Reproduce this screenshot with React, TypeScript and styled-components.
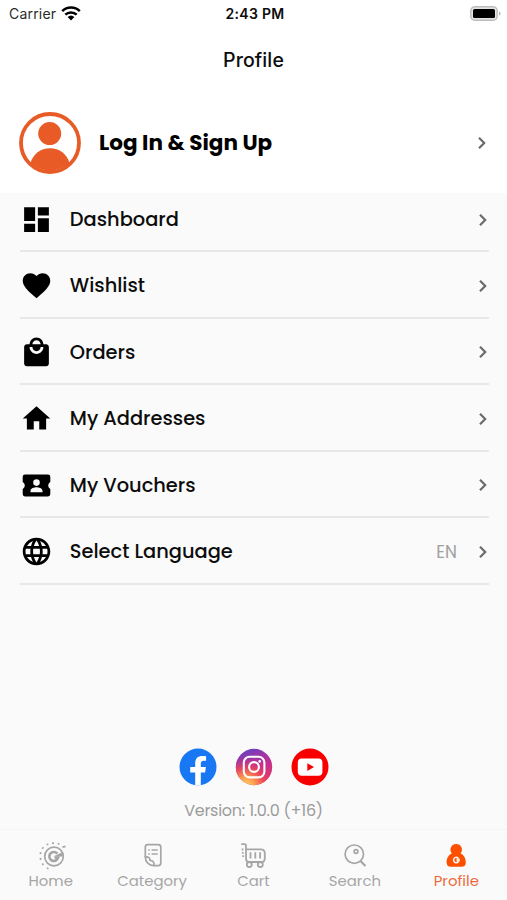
import React from 'react';
import styled, { createGlobalStyle } from 'styled-components';
import { MdDashboard, MdFavorite, MdLocalMall, MdHome, MdLanguage } from 'react-icons/md';

const GlobalStyle = createGlobalStyle`
  * { box-sizing: border-box; }
  body { margin: 0; background: #fafafa; }
`;

const Screen = styled.div`
  width: 100%;
  max-width: 507px;
  height: 900px;
  display: flex;
  flex-direction: column;
  overflow: hidden;
  background: #fafafa;
  color: #0c0c0c;
  font-family: Poppins, Inter, sans-serif;
`;

const Label = styled.span<{ $track?: number }>`
  letter-spacing: ${({ $track = 0 }) => $track}px;
  white-space: nowrap;
`;

const StatusBar = styled.div`
  display: grid;
  grid-template-columns: 1fr auto 1fr;
  align-items: center;
  height: 27px;
  padding: 0 6px 0 9px;
  background: #fff;
  font-family: Inter, sans-serif;
  font-size: 14px;
  line-height: 27px;
`;

const Carrier = styled.div`
  display: flex;
  align-items: center;
  gap: 5px;
  color: #2b2b2b;
`;

const Clock = styled.div`
  font-weight: 600;
`;

const BatterySlot = styled.div`
  display: flex;
  justify-content: flex-end;
`;

const TitleBar = styled.header`
  height: 65px;
  background: #fff;
  text-align: center;
  font-family: Inter, sans-serif;
  font-size: 19.5px;
  font-weight: 500;
  line-height: 66px;
`;

const LoginRow = styled.div`
  display: flex;
  align-items: center;
  height: 101px;
  padding: 0 20px 0 19px;
  background: #fff;
  color: #000;
`;

const LoginLabel = styled(Label)`
  flex: 1;
  margin-left: 18px;
  font-size: 21.5px;
  font-weight: 700;
`;

const Menu = styled.div`
  flex: 1;
  min-height: 0;
  padding: 0 18px 0 19.5px;
  overflow: hidden;
`;

const MenuRow = styled.div`
  display: flex;
  align-items: center;
  height: 66.5px;
  padding-top: 3px;
  padding-right: 1.5px;
  border-bottom: 2px solid #e8e8e8;

  &:first-child {
    height: 59px;
    padding-top: 0;
    padding-bottom: 4px;
  }
`;

const IconSlot = styled.div`
  display: flex;
  width: 33px;
  margin-right: 17.3px;
  color: #000;
`;

const MenuLabel = styled(Label)`
  flex: 1;
  font-size: 19.4px;
  font-weight: 500;
`;

const Value = styled.span`
  margin-right: 20.5px;
  color: #a0a0a0;
  font-size: 17px;
`;

const Footer = styled.div`
  display: flex;
  flex-direction: column;
  align-items: center;
  height: 81px;
`;

const Socials = styled.div`
  display: flex;
  gap: 18px;
`;

const Version = styled.div`
  margin-top: 12px;
  color: #9c9c9c;
  font-size: 16px;
  line-height: 26px;
`;

const NavBar = styled.nav`
  display: grid;
  grid-template-columns: repeat(5, 1fr);
  height: 71px;
  border-top: 1px solid #f4f4f4;
`;

const NavItem = styled.div<{ $active?: boolean }>`
  display: flex;
  flex-direction: column;
  align-items: center;
  padding-top: 11px;
  color: ${({ $active }) => ($active ? '#ed6a3c' : '#a6a6a6')};
  font-size: 14.9px;
  line-height: 22px;
`;

const NavIcon = styled.div`
  display: flex;
  height: 29px;
`;

const WifiIcon = () => (
  <svg width="20" height="15" viewBox="0 0 20 15">
    <g fill="none" stroke="#000" strokeWidth="2.5">
      <path d="M1.2 5.2a12.4 12.4 0 0 1 17.6 0" />
      <path d="M4.3 8.7a8.2 8.2 0 0 1 11.4 0" />
    </g>
    <path d="M6.6 11a5 5 0 0 1 6.8 0L10 14.5z" fill="#000" />
  </svg>
);

const BatteryIcon = () => (
  <svg width="31" height="15" viewBox="0 0 31 15">
    <rect x=".8" y=".8" width="26.4" height="13.4" rx="4" fill="#e4e4e4" stroke="#bdbdbd" strokeWidth="1.5" />
    <rect x="3" y="3" width="22" height="9" rx="1.5" fill="#000" />
    <path d="M29 5.4c2 .6 2 3.6 0 4.2z" fill="#b4b4b4" />
  </svg>
);

const Avatar = () => (
  <svg width="62" height="62" viewBox="0 0 62 62">
    <circle cx="31" cy="31" r="29" fill="#fff" stroke="#e85b27" strokeWidth="3.8" />
    <circle cx="30.7" cy="21.6" r="11.5" fill="#e85b27" />
    <path d="M11.5 51C14 42 21.5 36.2 31 36.2S48 42 50.5 51A29 29 0 0 1 11.5 51z" fill="#e85b27" />
  </svg>
);

const Chevron = () => (
  <svg width="10" height="14" viewBox="0 0 10 14">
    <path d="M2 1.8l5.200 5.200L2 12.200" fill="none" stroke="#6b6b6b" strokeWidth="2.200" />
  </svg>
);

const VoucherIcon = () => (
  <svg width="33" height="33" viewBox="0 0 33 33">
    <path
      fill="#000"
      fillRule="evenodd"
      d="M5 5.500h23a2.300 2.300 0 0 1 2.300 2.300v5.100a4.100 4.100 0 0 0 0 7.100v5.100a2.300 2.300 0 0 1-2.300 2.300H5a2.300 2.300 0 0 1-2.300-2.300V20a4.100 4.100 0 0 0 0-7.100V7.800A2.300 2.300 0 0 1 5 5.500zM16.500 10.300a3.300 3.300 0 1 0 0 6.600 3.300 3.300 0 0 0 0-6.600zM10.500 23.300h12v-1.500c0-2.400-3.800-3.500-6-3.500s-6 1.100-6 3.500z"
    />
  </svg>
);

const FacebookIcon = () => (
  <svg width="38" height="38" viewBox="0 0 38 38">
    <circle cx="19" cy="19" r="18.5" fill="#1877f2" />
    <path
      fill="#fff"
      d="M16.2 37.300V24.400h-5v-5.300h5v-4c0-4.700 2.800-7.200 7-7.200 1.500 0 2.700.1 3.900.3v4.500h-2.300c-2.300 0-3 1.400-3 2.900v3.500h5.100l-.8 5.300h-4.300v12.900a18 18 0 0 1-5.600 0z"
    />
  </svg>
);

const InstagramIcon = () => (
  <svg width="38" height="38" viewBox="0 0 38 38">
    <defs>
      <linearGradient id="igBase" x1=".35" y1="0" x2=".7" y2="1">
        <stop offset="0" stopColor="#6d3fc0" />
        <stop offset=".5" stopColor="#c32d91" />
        <stop offset="1" stopColor="#e8405f" />
      </linearGradient>
      <radialGradient id="igGlow" cx=".27" cy="1.05" r=".85">
        <stop offset="0" stopColor="#ffdc75" />
        <stop offset=".3" stopColor="#fda04d" />
        <stop offset=".62" stopColor="#ee4a55" stopOpacity=".85" />
        <stop offset="1" stopColor="#c32d91" stopOpacity="0" />
      </radialGradient>
    </defs>
    <circle cx="19" cy="19" r="18.2" fill="url(#igBase)" />
    <circle cx="19" cy="19" r="18.2" fill="url(#igGlow)" />
    <g fill="none" stroke="#fff" strokeWidth="2.1">
      <rect x="8.800" y="8.800" width="20.600" height="20.600" rx="5.800" />
      <circle cx="19" cy="19" r="4.900" />
    </g>
    <circle cx="24.700" cy="13.400" r="1.300" fill="#fff" />
  </svg>
);

const YoutubeIcon = () => (
  <svg width="38" height="38" viewBox="0 0 38 38">
    <circle cx="19" cy="19" r="18.5" fill="#f80000" />
    <rect x="6.800" y="10.400" width="24.600" height="17.400" rx="4" fill="#fff" />
    <path d="M16.300 15.300l6.700 3.800-6.700 3.800z" fill="#f80000" />
  </svg>
);

const HomeNavIcon = () => (
  <svg width="30" height="30" viewBox="0 0 30 30" fill="none" stroke="currentColor">
    <circle cx="18" cy="15.500" r="9.300" strokeWidth="1.700" />
    <path d="M21.300 12.600A4.500 4.500 0 1 0 22.200 16.500H18.500" strokeWidth="2.600" />
    <path d="M18.500 15.300l8-4v4z" fill="currentColor" strokeWidth=".5" />
    <path
      d="M26.500 6.200l3-.9M22.300 3.700l.6-1.500M17 2.900V1.300M11.800 4l-.7-1.300M7.500 7.500l-1.300-1M5.400 12.300l-1.700-.3M5.400 17.700l-1.700.3M7.500 22.700l-1.300 1M12 26.700l-.7 1.300"
      strokeWidth="1.900"
    />
  </svg>
);

const CategoryNavIcon = () => (
  <svg width="30" height="30" viewBox="0 0 30 30" fill="none" stroke="currentColor" strokeWidth="1.700">
    <path d="M8.300 16V6.100a2.500 2.500 0 0 1 2.500-2.500h10.500a2.500 2.500 0 0 1 2.500 2.500v16a2.500 2.500 0 0 1-2.500 2.500H17" />
    <path d="M8.300 16c3-.3 4.800.7 4.700 3.300 2.900 0 4.500 2.200 4 5.300-5.200 0-8.700-3.600-8.700-8.600z" />
    <path d="M11.200 9h1.600M14.500 9h6.200M11.200 13h1.600M14.500 13h6.200" />
  </svg>
);

const CartNavIcon = () => (
  <svg width="30" height="30" viewBox="0 0 30 30" fill="none" stroke="currentColor" strokeWidth="1.800">
    <path d="M3.300 3.200h3.300c1 0 1.400.6 1.400 1.500v12.800c0 2 1 3.500 3 3.500h12.500M8.300 8.300h14.500c2.700 0 4 1.700 4 4.200v4.700c0 2-1 3.800-3.300 3.800" />
    <path d="M12.500 11.200v6.300M17.300 11.200v6.300M22.100 11.200v6.300" />
    <path d="M3.700 8.500h1.700M3.900 11.800h1.700M4.300 15.100H6" />
    <circle cx="11.300" cy="23.500" r="2.500" />
    <circle cx="22.300" cy="23.500" r="2.500" />
  </svg>
);

const SearchNavIcon = () => (
  <svg width="30" height="30" viewBox="0 0 30 30" fill="none" stroke="currentColor" strokeWidth="1.700">
    <circle cx="14.300" cy="13.200" r="9.200" />
    <circle cx="16" cy="10.500" r="1.900" />
    <path d="M20.500 20l5 5" strokeWidth="2.200" />
  </svg>
);

const ProfileNavIcon = () => (
  <svg width="30" height="30" viewBox="0 0 30 30">
    <path
      fill="#fc5000"
      d="M15.200 3a5.600 5.600 0 0 1 4.300 9.300c3.200 1.600 5.300 5 5.300 9 0 3.200-1.400 4.500-4.400 4.500H10c-3 0-4.400-1.300-4.400-4.500 0-4 2.100-7.400 5.300-9A5.600 5.600 0 0 1 15.200 3z"
    />
    <path d="M17.300 17.200A2.700 2.700 0 1 0 17.900 19.700h-2.400M15.500 18.400h3.200" fill="none" stroke="#fff0e6" strokeWidth="1.600" />
  </svg>
);

const menu = [
  { label: 'Dashboard', icon: <MdDashboard size={33} /> },
  { label: 'Wishlist', icon: <MdFavorite size={33} /> },
  { label: 'Orders', icon: <MdLocalMall size={33} /> },
  { label: 'My Addresses', icon: <MdHome size={33} /> },
  { label: 'My Vouchers', icon: <VoucherIcon /> },
  { label: 'Select Language', icon: <MdLanguage size={33} />, value: 'EN' },
];

const tabs = [
  { label: 'Home', icon: <HomeNavIcon /> },
  { label: 'Category', icon: <CategoryNavIcon /> },
  { label: 'Cart', icon: <CartNavIcon /> },
  { label: 'Search', icon: <SearchNavIcon /> },
  { label: 'Profile', icon: <ProfileNavIcon />, active: true },
];

export default function App() {
  return (
    <Screen>
      <GlobalStyle />
      <StatusBar>
        <Carrier>
          <Label $track={0.2}>Carrier</Label>
          <WifiIcon />
        </Carrier>
        <Clock>
          <Label $track={0.3}>2:43 PM</Label>
        </Clock>
        <BatterySlot>
          <BatteryIcon />
        </BatterySlot>
      </StatusBar>
      <TitleBar>
        <Label $track={0.1}>Profile</Label>
      </TitleBar>
      <LoginRow>
        <Avatar />
        <LoginLabel>Log In &amp; Sign Up</LoginLabel>
        <Chevron />
      </LoginRow>
      <Menu>
        {menu.map((item) => (
          <MenuRow key={item.label}>
            <IconSlot>{item.icon}</IconSlot>
            <MenuLabel>{item.label}</MenuLabel>
            {item.value && <Value>{item.value}</Value>}
            <Chevron />
          </MenuRow>
        ))}
      </Menu>
      <Footer>
        <Socials>
          <FacebookIcon />
          <InstagramIcon />
          <YoutubeIcon />
        </Socials>
        <Version>
          <Label $track={-0.28}>Version: 1.0.0 (+16)</Label>
        </Version>
      </Footer>
      <NavBar>
        {tabs.map((tab) => (
          <NavItem key={tab.label} $active={tab.active}>
            <NavIcon>{tab.icon}</NavIcon>
            <Label>{tab.label}</Label>
          </NavItem>
        ))}
      </NavBar>
    </Screen>
  );
}
